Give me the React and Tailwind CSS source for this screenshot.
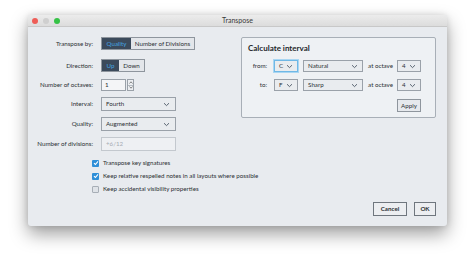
import React from 'react';

const Chevron = () => (
  <svg width="7" height="5" viewBox="0 0 7 5" className="shrink-0">
    <path d="M1 1.2 L3.5 3.6 L6 1.2" fill="none" stroke="#4a5563" strokeWidth="0.9" />
  </svg>
);

function Select({ value, width, focus }) {
  return (
    <div
      className={`flex items-center justify-between pl-[4px] pr-[4px] h-[12px] bg-[#e9ecef] border ${
        focus ? 'border-[#6fb8e6] shadow-[0_0_0_1px_#a9d6f2]' : 'border-[#9aa1a9]'
      } ${width}`}
    >
      <span>{value}</span>
      <Chevron />
    </div>
  );
}

function Checkbox({ checked, label }) {
  return (
    <div className="flex items-center h-[8px] gap-[4px]">
      {checked ? (
        <div className="w-[7px] h-[7px] rounded-[1px] bg-[#2f8fd8] flex items-center justify-center shrink-0">
          <svg width="6" height="6" viewBox="0 0 6 6">
            <path d="M1 3.1 L2.4 4.5 L5 1.4" fill="none" stroke="white" strokeWidth="1.1" />
          </svg>
        </div>
      ) : (
        <div className="w-[7px] h-[7px] rounded-[1px] bg-[#dfe3e8] border border-[#a7aeb6] shrink-0" />
      )}
      <span>{label}</span>
    </div>
  );
}

export default function App() {
  return (
    <div className="w-[474px] h-[266px] bg-white pt-[15px] pl-[28px] overflow-hidden whitespace-nowrap font-['Lato',sans-serif] text-[6.2px] text-[#2b2f33]">
      <div className="w-[419px] h-[211px] bg-[#e8ebef] rounded-[3px] shadow-[0_8px_18px_rgba(0,0,0,0.38),0_0_6px_rgba(0,0,0,0.12)] flex flex-col overflow-hidden">
        {/* title bar */}
        <div className="h-[12px] bg-gradient-to-b from-[#ececec] to-[#dcdcdc] border-b border-[#c8c8c8] flex items-center relative">
          <div className="flex gap-[5px] pl-[4px]">
            <span className="w-[6px] h-[6px] rounded-full bg-[#ee5d57]" />
            <span className="w-[6px] h-[6px] rounded-full bg-[#cfcfcf]" />
            <span className="w-[6px] h-[6px] rounded-full bg-[#35c246]" />
          </div>
          <div className="absolute inset-0 flex items-center justify-center text-[7px] text-[#3a3a3a]">
            Transpose
          </div>
        </div>

        <div className="flex pt-[10px]">
          {/* left column */}
          <div className="w-[213px] flex flex-col">
            <div className="flex items-center h-[13px]">
              <div className="w-[65px] text-right">Transpose by:</div>
              <div className="ml-[8px] flex h-[13px] border border-[#8e959d]">
                <div className="w-[29px] bg-[#3b4a5b] text-[#45a5e2] flex items-center justify-center">Quality</div>
                <div className="w-[63px] bg-[#e3e6ea] flex items-center justify-center">Number of Divisions</div>
              </div>
            </div>
            <div className="flex items-center h-[13px] mt-[9px]">
              <div className="w-[65px] text-right">Direction:</div>
              <div className="ml-[8px] flex h-[13px] border border-[#8e959d]">
                <div className="w-[17px] bg-[#3b4a5b] text-[#45a5e2] flex items-center justify-center">Up</div>
                <div className="w-[25px] bg-[#e3e6ea] flex items-center justify-center">Down</div>
              </div>
            </div>
            <div className="flex items-center h-[12px] mt-[7px]">
              <div className="w-[65px] text-right">Number of octaves:</div>
              <div className="ml-[8px] flex h-[12px]">
                <div className="w-[25px] bg-[#f4f5f7] border border-[#9aa1a9] pl-[3px] flex items-center">1</div>
                <div className="w-[7px] ml-[1px] border border-[#9aa1a9] bg-[#eceef1] flex flex-col">
                  <div className="flex-1 flex items-center justify-center border-b border-[#b5bbc2]">
                    <svg width="4" height="3" viewBox="0 0 4 3"><path d="M0.5 2.5 L2 0.8 L3.5 2.5" fill="none" stroke="#555" strokeWidth="0.7" /></svg>
                  </div>
                  <div className="flex-1 flex items-center justify-center">
                    <svg width="4" height="3" viewBox="0 0 4 3"><path d="M0.5 0.5 L2 2.2 L3.5 0.5" fill="none" stroke="#555" strokeWidth="0.7" /></svg>
                  </div>
                </div>
              </div>
            </div>
            <div className="flex items-center h-[14px] mt-[6px]">
              <div className="w-[65px] text-right">Interval:</div>
              <div className="ml-[8px]">
                <div className="flex items-center justify-between pl-[4px] pr-[5px] h-[14px] w-[75px] bg-[#e9ecef] border border-[#9aa1a9]">
                  <span>Fourth</span>
                  <Chevron />
                </div>
              </div>
            </div>
            <div className="flex items-center h-[14px] mt-[6px]">
              <div className="w-[65px] text-right">Quality:</div>
              <div className="ml-[8px]">
                <div className="flex items-center justify-between pl-[4px] pr-[5px] h-[14px] w-[75px] bg-[#e9ecef] border border-[#9aa1a9]">
                  <span>Augmented</span>
                  <Chevron />
                </div>
              </div>
            </div>
            <div className="flex items-center h-[14px] mt-[6px]">
              <div className="w-[65px] text-right">Number of divisions:</div>
              <div className="ml-[8px]">
                <div className="flex items-center pl-[4px] h-[14px] w-[75px] bg-[#eef0f3] border border-[#c3c8ce] text-[#a6acb3]">
                  +6/12
                </div>
              </div>
            </div>
            <div className="flex flex-col gap-[5px] pl-[64px] mt-[8px]">
              <Checkbox checked label="Transpose key signatures" />
              <Checkbox checked label="Keep relative respelled notes in all layouts where possible" />
              <Checkbox label="Keep accidental visibility properties" />
            </div>
          </div>

          {/* right panel */}
          <div className="w-[195px] h-[81px] bg-[#eef1f4] border border-[#a8afb7] rounded-[2px] flex flex-col pl-[6px] pr-[14px]">
            <div className="mt-[4px] text-[8px] font-bold text-[#23272b]">Calculate interval</div>
            <div className="flex items-center mt-[6px] h-[12px]">
              <div className="w-[20px] text-right">from:</div>
              <div className="ml-[7px]"><Select value="C" width="w-[24px]" focus /></div>
              <div className="ml-[5px]"><Select value="Natural" width="w-[60px]" /></div>
              <div className="ml-[5px]">at octave</div>
              <div className="ml-[4px]"><Select value="4" width="w-[24px]" /></div>
            </div>
            <div className="flex items-center mt-[7px] h-[12px]">
              <div className="w-[20px] text-right">to:</div>
              <div className="ml-[7px]"><Select value="F" width="w-[24px]" /></div>
              <div className="ml-[5px]"><Select value="Sharp" width="w-[60px]" /></div>
              <div className="ml-[5px]">at octave</div>
              <div className="ml-[4px]"><Select value="4" width="w-[24px]" /></div>
            </div>
            <div className="flex justify-end mt-[8px]">
              <div className="w-[24px] h-[13px] border border-[#8e959d] bg-[#e6e9ed] flex items-center justify-center">Apply</div>
            </div>
          </div>
        </div>

        {/* buttons */}
        <div className="mt-auto mb-[10px] flex justify-end gap-[7px] pr-[11px]">
          <div className="w-[34px] h-[14px] border border-[#6f767e] bg-[#eceef1] flex items-center justify-center font-bold">Cancel</div>
          <div className="w-[22px] h-[14px] border border-[#6f767e] bg-[#eceef1] flex items-center justify-center font-bold">OK</div>
        </div>
      </div>
    </div>
  );
}
